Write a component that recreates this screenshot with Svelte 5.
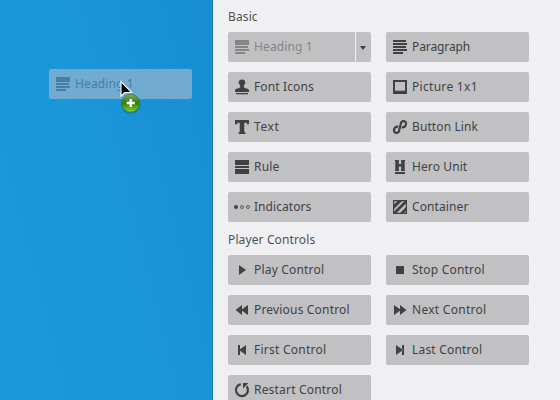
<script>
  const basic = [
    { icon: 'heading', label: 'Heading 1', spacing: 0.12, faded: true, menu: true },
    { icon: 'paragraph', label: 'Paragraph', spacing: -0.1 },
    { icon: 'stamp', label: 'Font Icons', spacing: 0.12 },
    { icon: 'picture', label: 'Picture 1x1', spacing: 0.3 },
    { icon: 'text', label: 'Text', spacing: 0.6 },
    { icon: 'link', label: 'Button Link', spacing: 0.1 },
    { icon: 'rule', label: 'Rule', spacing: 0.2 },
    { icon: 'hero', label: 'Hero Unit', spacing: 0.1 },
    { icon: 'dots', label: 'Indicators', spacing: 0.05 },
    { icon: 'container', label: 'Container', spacing: 0.1 }
  ];
  const player = [
    { icon: 'play', label: 'Play Control', spacing: 0.18 },
    { icon: 'stop', label: 'Stop Control', spacing: 0.2 },
    { icon: 'previous', label: 'Previous Control', spacing: 0.18 },
    { icon: 'next', label: 'Next Control', spacing: 0.28 },
    { icon: 'first', label: 'First Control', spacing: 0.25 },
    { icon: 'last', label: 'Last Control', spacing: 0.2 },
    { icon: 'restart', label: 'Restart Control', spacing: 0.19 }
  ];
  const sections = [
    { title: 'Basic', items: basic },
    { title: 'Player Controls', items: player }
  ];
</script>

{#snippet glyph(name)}
  <svg class="icon" viewBox="0 0 16 16" fill="currentColor">
    {#if name === 'heading'}
      <path d="M1 1h14v5H1zM1 7h13v2H1zM1 10h14v2H1zM1 13h10v2H1z" />
    {:else if name === 'paragraph'}
      <path d="M1 1h13v2H1zM1 4h14v2H1zM1 7h13v2H1zM1 10h14v2H1zM1 13h10v2H1z" />
    {:else if name === 'stamp'}
      <path d="M8 .5a3.300 3.300 0 0 1 3.300 3.300c0 1.500-1.500 2.200-1.500 3.500 0 1.500 1 1.900 2.700 2.100 1.700.2 2.500.8 2.500 2.300V13H1v-1.300c0-1.500.8-2.100 2.500-2.300 1.700-.2 2.700-.6 2.700-2.100C6.200 6 4.700 5.300 4.700 3.800A3.300 3.300 0 0 1 8 .5zM2 14h12v1.200H2z" />
    {:else if name === 'picture'}
      <path fill-rule="evenodd" d="M1 1h14v14H1zM3 3v8.800h10V3z" />
    {:else if name === 'text'}
      <path d="M1 1h14v4.300h-2L12.500 3.800H10.300v9.400l1.200.3V15h-7v-1.500l1.200-.3V3.800H3.500L3 5.300H1z" />
    {:else if name === 'link'}
      <path d="M9.700 8.300C12.300 9 14.500 6.500 14 4.200 13.500 1.500 9.600 1.300 8.900 4.200L7.100 11.800C6.400 14.700 2.500 14.500 2 11.800 1.500 9.500 3.700 7 6.300 7.700" fill="none" stroke="currentColor" stroke-width="2.200" />
    {:else if name === 'rule'}
      <path d="M1 1h14v5H1zM1 7h14v2H1zM1 10h14v5H1z" />
    {:else if name === 'hero'}
      <path d="M3 1h4v1.200h-.2V5h2.400V2.200H9V1h4v1.200h-.3v8.600h.3V12H9v-1.200h.2V7.400H6.800v3.400H7V12H3v-1.200h.3V2.200H3zM3 13h10v2H3z" />
    {:else if name === 'dots'}
      <circle cx="2" cy="8" r="2" />
      <circle cx="8" cy="8" r="1.500" fill="none" stroke="currentColor" stroke-width=".8" />
      <circle cx="14" cy="8" r="1.500" fill="none" stroke="currentColor" stroke-width=".8" />
    {:else if name === 'container'}
      <path fill-rule="evenodd" d="M1 1h14v14H1zM2.200 2.200v11.600h11.600V2.200z" />
      <path d="M2 5.500 5.500 2H10L2 10zM2 12.500 12.500 2H14v2.500L4.500 14H2zM8 14l6-6v4l-2 2z" />
    {:else if name === 'play'}
      <path d="M5 3l7 5-7 5z" />
    {:else if name === 'stop'}
      <path d="M4 4h8v8H4z" />
    {:else if name === 'previous'}
      <path d="M8 3v10L1.500 8zM14 3v10L7 8z" />
    {:else if name === 'next'}
      <path d="M2 3v10l7-5zM8 3v10l6.500-5z" />
    {:else if name === 'first'}
      <path d="M4 3h2v10H4zM12 3v10L5 8z" />
    {:else if name === 'last'}
      <path d="M10 3h2v10h-2zM4 3v10l7-5z" />
    {:else if name === 'restart'}
      <path d="M6.800 2.200A6 6 0 1 0 12.600 4.300" fill="none" stroke="currentColor" stroke-width="2.200" />
      <path d="M9 1h5.500L9 6.500z" />
    {/if}
  </svg>
{/snippet}

<div class="app">
  <main class="canvas">
    <div class="tile ghost">
      {@render glyph('heading')}
      <span class="label" style:letter-spacing="0.12px">Heading 1</span>
    </div>
    <svg class="cursor" width="28" height="38" viewBox="0 0 28 38">
      <defs>
        <linearGradient id="badge" x1="0" y1="0" x2="0" y2="1">
          <stop offset="0" stop-color="#83a872" />
          <stop offset=".45" stop-color="#397b16" />
          <stop offset=".5" stop-color="#35800b" />
          <stop offset="1" stop-color="#84d52b" />
        </linearGradient>
      </defs>
      <path d="M2 2.500v14.500l3.700-3.400 6.800-.3z" fill="#000" stroke="#fff" stroke-width="1.100" />
      <circle cx="11.700" cy="25.200" r="9.800" fill="#064a76" opacity=".3" />
      <circle cx="11.700" cy="24.200" r="9" fill="url(#badge)" stroke="#39752c" stroke-width=".7" />
      <path d="M7.700 24h8M11.700 20v8" stroke="#fff" stroke-width="2.300" />
    </svg>
  </main>
  <aside class="panel">
    {#each sections as section}
      <section>
        <h2>{section.title}</h2>
        <div class="grid">
          {#each section.items as item}
            <div class="tile" class:faded={item.faded}>
              {@render glyph(item.icon)}
              <span class="label" style:letter-spacing="{item.spacing}px">{item.label}</span>
              {#if item.menu}
                <span class="menu"><i></i></span>
              {/if}
            </div>
          {/each}
        </div>
      </section>
    {/each}
  </aside>
</div>

<style>
  .app {
    display: flex;
    width: 560px;
    height: 400px;
    overflow: hidden;
    font: 12px/16px 'Noto Sans', sans-serif;
    color: #404143;
  }
  .canvas {
    position: relative;
    box-sizing: border-box;
    width: 213px;
    flex: none;
    border-right: 1px solid #147bb5;
    background: linear-gradient(76deg, #1a99db 0%, #1a95d8 55%, #188dd1 100%);
  }
  .panel {
    flex: 1;
    padding: 9px 0 0 15px;
    background: #f0f0f2;
  }
  section {
    margin-bottom: 10px;
  }
  h2 {
    margin: 0 0 7px;
    font-size: 12px;
    line-height: 16px;
    font-weight: 400;
    letter-spacing: 0.12px;
    color: #505153;
  }
  .grid {
    display: grid;
    grid-template-columns: 143px 143px;
    grid-auto-rows: 30px;
    gap: 10px 15px;
  }
  .tile {
    display: flex;
    align-items: center;
    gap: 4px;
    box-sizing: border-box;
    width: 143px;
    height: 30px;
    padding-left: 6px;
    border-radius: 2px;
    background: #c1c1c3;
    overflow: hidden;
  }
  .icon {
    width: 16px;
    height: 16px;
    flex: none;
    overflow: visible;
  }
  .label {
    white-space: nowrap;
  }
  .faded .icon,
  .faded .label {
    color: #858587;
  }
  .menu {
    display: flex;
    align-items: center;
    justify-content: center;
    box-sizing: border-box;
    width: 16px;
    height: 30px;
    margin-left: auto;
    padding-right: 2px;
    border-left: 1px solid #f0f0f2;
  }
  .menu i {
    margin-top: 2px;
    border: 3px solid transparent;
    border-top: 4px solid #404143;
    border-bottom: 0;
  }
  .ghost {
    position: absolute;
    left: 49px;
    top: 69px;
    background: #71abcf;
    color: #437fa6;
  }
  .cursor {
    position: absolute;
    left: 119px;
    top: 79px;
  }
</style>
